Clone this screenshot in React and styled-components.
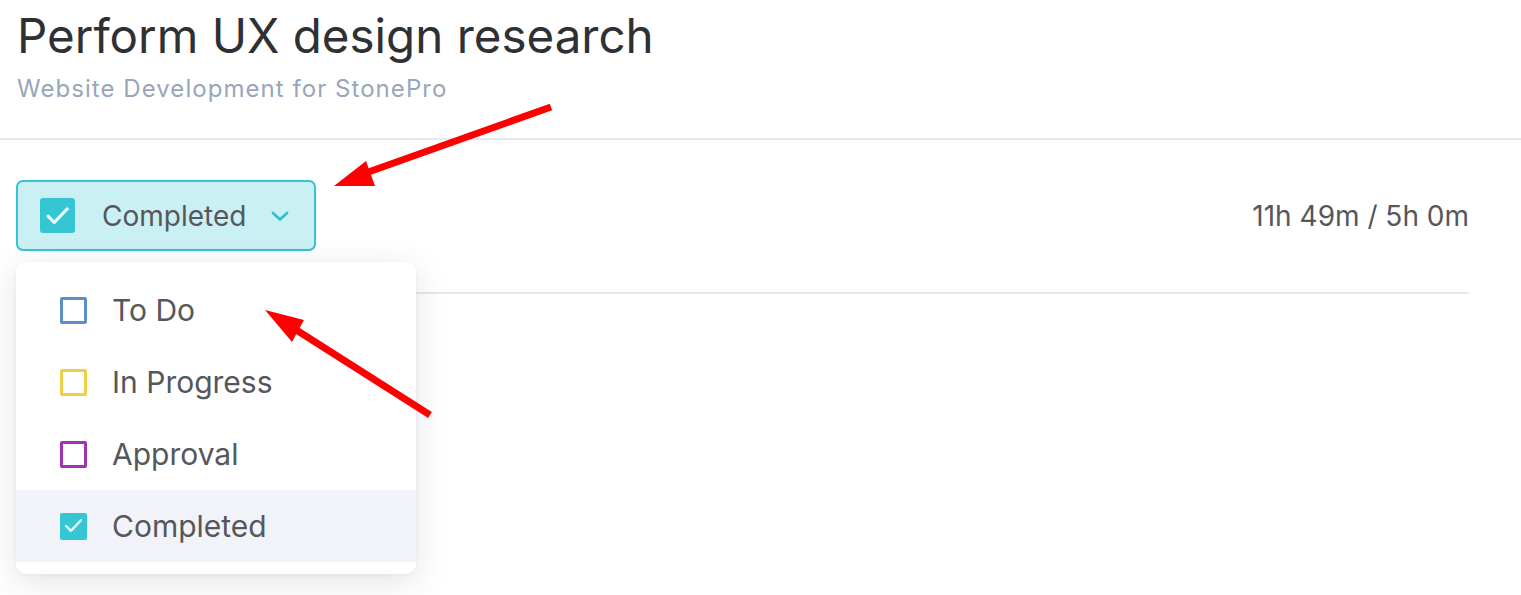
import React from "react";
import styled, { createGlobalStyle } from "styled-components";

const Global = createGlobalStyle`
  html, body { margin: 0; padding: 0; background: #fff; }
  body { font-family: Inter, "Noto Sans", "Liberation Sans", sans-serif; }
  * { box-sizing: border-box; }
`;

const Page = styled.div`
  position: relative;
  width: 1521px;
  height: 595px;
  overflow: hidden;
  background: #fff;
`;

const Header = styled.header`
  padding: 7px 16px 35px 17px;
  border-bottom: 2px solid #e6e8f0;
`;

const Title = styled.h1`
  margin: 0;
  font-size: 47.5px;
  line-height: 58px;
  font-weight: 400;
  color: #2f3033;
`;

const Subtitle = styled.div`
  margin-top: 9px;
  font-size: 24px;
  line-height: 29px;
  font-weight: 400;
  letter-spacing: 1.05px;
  color: #97a6bb;
`;

const Body = styled.section`
  position: relative;
  padding: 40px 52px 0 16px;
`;

const Toolbar = styled.div`
  display: flex;
  align-items: center;
  justify-content: space-between;
  padding-bottom: 41px;
  border-bottom: 2px solid #e6e8f0;
`;

const StatusButton = styled.button`
  display: flex;
  align-items: center;
  height: 71px;
  width: 300px;
  padding: 0 24px 0 22px;
  background: #caf0f3;
  border: 2px solid #33c5d3;
  border-radius: 7px;
  font-family: inherit;
  cursor: pointer;
`;

const ButtonLabel = styled.span`
  margin-left: 27px;
  font-size: 28px;
  color: #55575c;
  flex: 1;
  text-align: left;
`;

const Box = styled.span`
  display: inline-flex;
  align-items: center;
  justify-content: center;
  flex: none;
  width: ${(p) => p.size}px;
  height: ${(p) => p.size}px;
  border-radius: ${(p) => (p.size > 30 ? 3 : 2)}px;
  border: ${(p) => (p.checked ? "none" : `3px solid ${p.color}`)};
  background: ${(p) => (p.checked ? p.color : "transparent")};
`;

const Time = styled.div`
  font-size: 28px;
  color: #55575c;
`;

const Menu = styled.ul`
  position: absolute;
  left: 16px;
  top: 122px;
  width: 400px;
  margin: 0;
  padding: 12px 0;
  list-style: none;
  background: #fff;
  border-radius: 10px;
  box-shadow: 0 8px 34px rgba(40, 45, 70, 0.13), 0 1px 4px rgba(40, 45, 70, 0.05);
`;

const Item = styled.li`
  display: flex;
  align-items: center;
  height: 72px;
  padding-left: 44px;
  background: ${(p) => (p.active ? "#f2f3f8" : "transparent")};
`;

const ItemLabel = styled.span`
  margin-left: 25px;
  font-size: 30px;
  color: #55575c;
`;

const Overlay = styled.svg`
  position: absolute;
  left: 0;
  top: 0;
  pointer-events: none;
`;

const Check = ({ size }) => (
  <svg width={size * 0.78} height={size * 0.78} viewBox="0 0 24 24" fill="none">
    <path d="M3.5 12.5l5.5 5.5L20.5 6" stroke="#e9fbfd" strokeWidth="2.8" strokeLinecap="round" strokeLinejoin="round" />
  </svg>
);

const Chevron = () => (
  <svg width="20" height="12" viewBox="0 0 20 12" fill="none">
    <path d="M3 3l7 6.5L17 3" stroke="#2fc3d2" strokeWidth="2.8" strokeLinecap="round" strokeLinejoin="round" />
  </svg>
);

const statuses = [
  { label: "To Do", color: "#5b8fc5" },
  { label: "In Progress", color: "#f3cd45" },
  { label: "Approval", color: "#a032b4" },
  { label: "Completed", color: "#35c6d4", checked: true },
];

export default function App() {
  return (
    <Page>
      <Global />
      <Header>
        <Title>Perform UX design research</Title>
        <Subtitle>Website Development for StonePro</Subtitle>
      </Header>
      <Body>
        <Toolbar>
          <StatusButton>
            <Box size={35} color="#35c6d4" checked>
              <Check size={35} />
            </Box>
            <ButtonLabel>Completed</ButtonLabel>
            <Chevron />
          </StatusButton>
          <Time>11h 49m / 5h 0m</Time>
        </Toolbar>
        <Menu>
          {statuses.map((s) => (
            <Item key={s.label} active={s.checked}>
              <Box size={27} color={s.color} checked={s.checked}>
                {s.checked && <Check size={27} />}
              </Box>
              <ItemLabel>{s.label}</ItemLabel>
            </Item>
          ))}
        </Menu>
      </Body>
      <Overlay width="1521" height="595" viewBox="0 0 1521 595">
        <line x1="551" y1="107" x2="360" y2="175" stroke="#ff0000" strokeWidth="7" />
        <polygon points="334,186 366,161 375,186" fill="#ff0000" />
        <line x1="430" y1="415" x2="290" y2="326" stroke="#ff0000" strokeWidth="7" />
        <polygon points="265,310 304,320 292,342" fill="#ff0000" />
      </Overlay>
    </Page>
  );
}
